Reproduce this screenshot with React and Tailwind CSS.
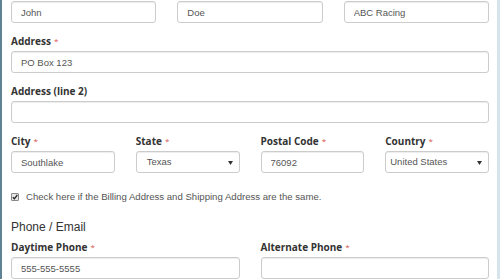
import React from 'react'

const labelCls = "block h-4 leading-4 mb-[2px] text-[10px] font-bold text-[#333] font-['Open_Sans',sans-serif] whitespace-nowrap"
const inputCls = "block w-full h-[22px] px-[9px] text-[9.5px] text-[#555] bg-white border border-[#ccc] rounded-[3px] shadow-[inset_0_1px_1px_rgba(0,0,0,0.075)] font-['Liberation_Sans',Arial,sans-serif] outline-none"

const Label = ({ children, required }) => (
  <label className={labelCls}>
    {children}
    {required && <span className="text-[#d9534f] ml-[3px] text-[8px] font-normal align-top">*</span>}
  </label>
)

const Input = ({ value = '', placeholder = '' }) => (
  <input className={inputCls} defaultValue={value} placeholder={placeholder} readOnly />
)

const Select = ({ value, indent }) => (
  <div className="relative h-[22px] bg-white border border-[#ccc] rounded-[3px] shadow-[inset_0_1px_1px_rgba(0,0,0,0.075)] flex items-center">
    <span className={`text-[9.5px] leading-none text-[#555] font-['Liberation_Sans',Arial,sans-serif] ${indent}`}>{value}</span>
    <svg className="absolute right-[6px] top-[9px]" width="5" height="4" viewBox="0 0 5 4">
      <path d="M0 0h5L2.5 4z" fill="#333" />
    </svg>
  </div>
)

export default function App() {
  return (
    <div className="w-[500px] h-[279px] overflow-hidden bg-white border-l-2 border-l-[#5f8394] border-r-[3px] border-r-[#d5e3ea] pl-[9px] pr-[8px] flex flex-col leading-none">
      <div className="grid grid-cols-3 gap-x-[21px] mt-[1px]">
        <Input value="John" />
        <Input value="Doe" />
        <Input value="ABC Racing" />
      </div>

      <div className="mt-[10px]">
        <Label required>Address</Label>
        <Input value="PO Box 123" />
      </div>

      <div className="mt-[10px]">
        <Label>Address (line 2)</Label>
        <Input />
      </div>

      <div className="mt-[10px] grid grid-cols-4 gap-x-[21px]">
        <div>
          <Label required>City</Label>
          <Input value="Southlake" />
        </div>
        <div>
          <Label required>State</Label>
          <Select value="Texas" indent="pl-[10px]" />
        </div>
        <div>
          <Label required>Postal Code</Label>
          <Input value="76092" />
        </div>
        <div>
          <Label required>Country</Label>
          <Select value="United States" indent="pl-[4px]" />
        </div>
      </div>

      <div className="mt-[17px] h-[14px] flex items-center gap-[7px] font-['Liberation_Sans',Arial,sans-serif] text-[9.6px] text-[#555] whitespace-nowrap">
        <span className="w-[8px] h-[8px] border border-[#888] bg-[#e6e6e6] rounded-[1px] flex items-center justify-center">
          <svg width="6" height="6" viewBox="0 0 6 6">
            <path d="M0.8 3.2L2.4 4.8L5.3 1" stroke="#222" strokeWidth="1.3" fill="none" />
          </svg>
        </span>
        <span>Check here if the Billing Address and Shipping Address are the same.</span>
      </div>

      <div className="mt-[15px] h-4 leading-4 text-[12px] text-[#333] font-['Liberation_Sans',Arial,sans-serif]">
        Phone / Email
      </div>

      <div className="mt-[4px] grid grid-cols-2 gap-x-[21px]">
        <div>
          <Label required>Daytime Phone</Label>
          <Input value="555-555-5555" />
        </div>
        <div>
          <Label required>Alternate Phone</Label>
          <Input />
        </div>
      </div>
    </div>
  )
}
